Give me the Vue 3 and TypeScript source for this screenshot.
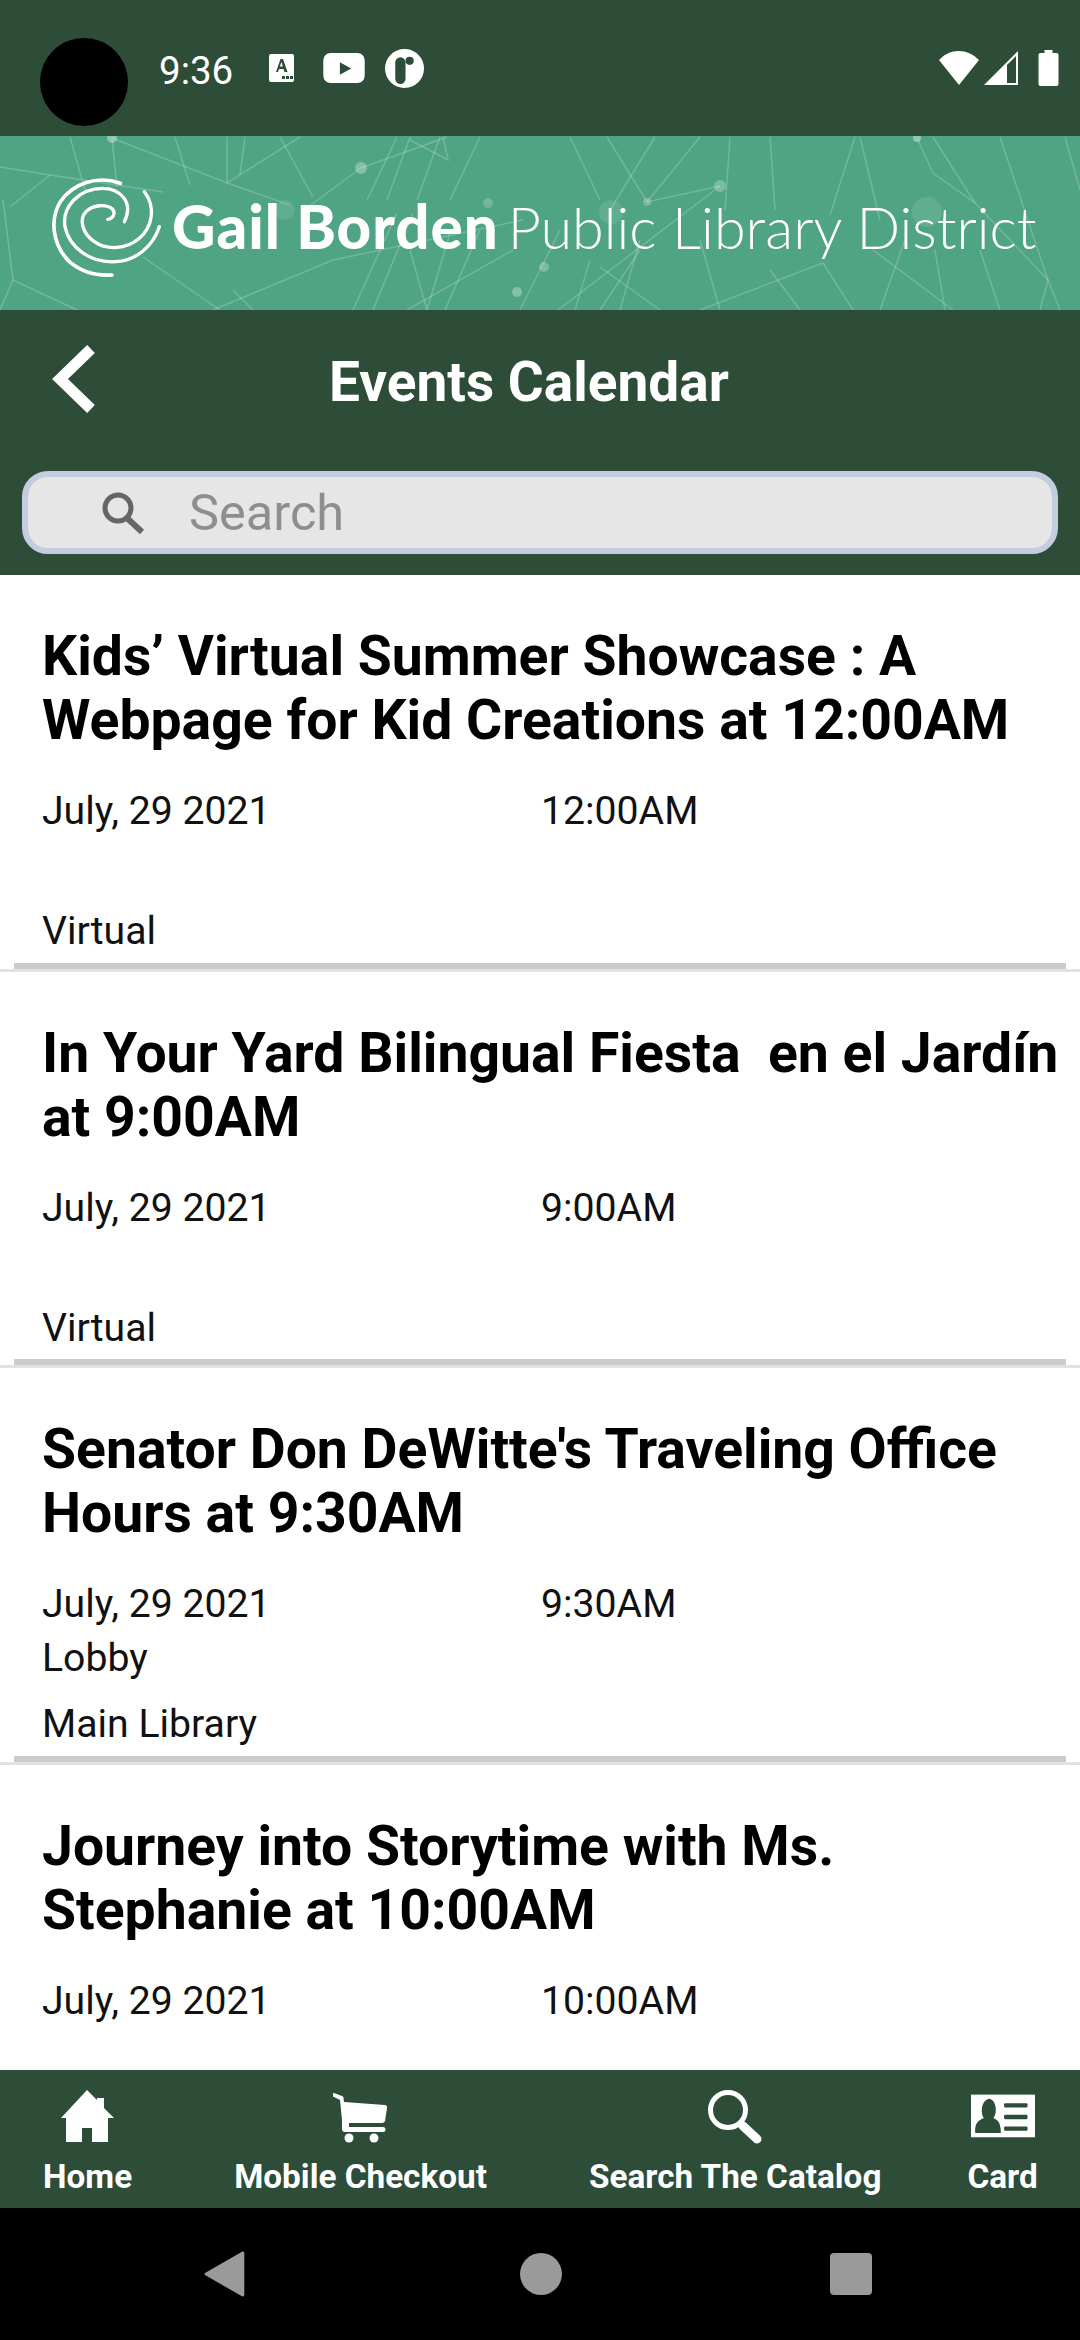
<template>
  <div class="screen">
    <div class="status">
      <div class="status__camera"></div>
      <span class="status__time">9:36</span>
      <svg class="status__a" width="26" height="28" viewBox="0 0 26 28">
        <rect x="0" y="0" width="25" height="28" rx="2" fill="#fff" />
        <path d="M7 18 L11.5 5 h2.5 L18.500 18 h-3 l-1-3 h-4.500 l-1 3z M10.800 12.500 h3 L12.500 8z" fill="#2d4d39" fill-rule="evenodd" />
        <rect x="13" y="22" width="3" height="3" fill="#2d4d39" />
        <rect x="17" y="22" width="3" height="3" fill="#2d4d39" />
        <rect x="21" y="22" width="3" height="3" fill="#2d4d39" />
      </svg>
      <svg class="status__yt" width="42" height="30" viewBox="0 0 40 29">
        <rect x="0" y="0" width="40" height="29" rx="7" fill="#fff" />
        <path d="M16 9 L27 15 L16 21z" fill="#2d4d39" />
      </svg>
      <svg class="status__r" width="39" height="39" viewBox="0 0 38 38">
        <circle cx="19" cy="19" r="19" fill="#fff" />
        <rect x="10" y="8" width="10" height="26" rx="5" fill="#2d4d39" />
        <circle cx="24" cy="11.500" r="4" fill="#2d4d39" />
      </svg>
      <div class="status__right">
        <svg width="42" height="36" viewBox="0 0 42 36">
          <path d="M1 10 C12 -2 29 -2 41 10 L21 35z" fill="#fff" />
        </svg>
        <svg width="36" height="36" viewBox="0 0 36 36">
          <path d="M1 35 L35 1 V35z" fill="#fff" />
          <path d="M24 15 L33 6 V33 H24z" fill="#2d4d39" />
          <path d="M24 15 L24 33 H22 V17z" fill="#fff" />
        </svg>
        <svg class="status__batt" width="21" height="36" viewBox="0 0 20 36">
          <path d="M6 0 H14 V3 H18 a2 2 0 0 1 2 2 V34 a2 2 0 0 1-2 2 H2 a2 2 0 0 1-2-2 V5 a2 2 0 0 1 2-2 H6z" fill="#fff" />
        </svg>
      </div>
    </div>

    <div class="banner">
      <svg class="banner__bg" width="1080" height="174" viewBox="0 136 1080 174">
        <path v-for="(d, i) in bannerLines" :key="i" :d="d" fill="none" stroke="#fff" stroke-opacity="0.2" stroke-width="1.500" />
        <circle v-for="(n, i) in bannerNodes" :key="'n' + i" :cx="n[0]" :cy="n[1]" :r="n[2]" fill="#fff" :fill-opacity="n[3]" />
      </svg>
      <svg class="banner__logo" width="125" height="115" viewBox="0 0 375 345" fill="none" stroke="#fff" stroke-linecap="round">
        <path d="M238 40 C170 15 95 40 58 95 C25 150 35 225 85 275 C120 305 165 318 213 315" stroke-width="11" />
        <path d="M355 170 C335 230 285 272 225 275 C150 280 85 235 72 170 C62 110 115 55 185 55 C235 55 280 95 250 155" stroke-width="10" />
        <path d="M310 65 C345 110 335 170 295 205 C255 240 195 240 160 215 C125 190 112 150 135 125 C155 105 195 100 215 118 C225 130 215 148 200 148" stroke-width="10" />
      </svg>
      <div class="banner__name"><b>Gail Borden</b><span>Public Library District</span></div>
    </div>

    <div class="top">
      <div class="top__bar">
        <svg class="top__back" width="46" height="70" viewBox="0 0 46 70">
          <path d="M40 5 L9 35 L40 65" fill="none" stroke="#fff" stroke-width="11" />
        </svg>
        <div class="top__title">Events Calendar</div>
      </div>
      <div class="search">
        <svg width="44" height="44" viewBox="0 0 44 44" fill="none" stroke="#666">
          <circle cx="17" cy="17" r="13" stroke-width="5" />
          <path d="M26 27 L41 41" stroke-width="6" />
        </svg>
        <span class="search__text">Search</span>
      </div>
    </div>

    <div class="list">
      <div v-for="ev in events" :key="ev.title" class="event">
        <div class="event__title">{{ ev.title }}</div>
        <div class="event__when">
          <span class="event__date">{{ ev.date }}</span>
          <span>{{ ev.time }}</span>
        </div>
        <div class="event__room">{{ ev.room }}</div>
        <div class="event__place">{{ ev.place }}</div>
        <div class="event__line"></div>
      </div>
    </div>

    <div class="tabs">
      <div class="tab tab--home">
        <svg width="54" height="54" viewBox="0 0 54 54">
          <path d="M0 28 L26 0 L36 10 V8 H43 V18 L53 28 H47 V52 H31 V38 H21 V52 H5 V28z" fill="#fff" />
        </svg>
        <span>Home</span>
      </div>
      <div class="tab tab--cart">
        <svg width="56" height="54" viewBox="0 0 56 54">
          <path d="M1 3 L9 6 a2 2 0 0 1 1.500 2 L11 12 L52 15 a2.500 2.500 0 0 1 2 3 L52 31 a3 3 0 0 1-3 2 H16 V37 H50 a2 2 0 0 1 0 5 H12 a3 3 0 0 1-3-3 V30 L7 10 L1 7 a2 2 0 0 1 0-4z" fill="#fff" />
          <circle cx="16" cy="48" r="4.500" fill="#fff" />
          <circle cx="41" cy="48" r="4.500" fill="#fff" />
        </svg>
        <span>Mobile Checkout</span>
      </div>
      <div class="tab tab--search">
        <svg width="56" height="56" viewBox="0 0 56 56" fill="none" stroke="#fff" stroke-linecap="round">
          <circle cx="21" cy="21" r="17.500" stroke-width="5" />
          <path d="M36 37 L50 50" stroke-width="9" />
        </svg>
        <span>Search The Catalog</span>
      </div>
      <div class="tab tab--card">
        <svg width="64" height="45" viewBox="0 0 60 42">
          <rect width="60" height="40" fill="#fff" />
          <path d="M4 36 C3 26 8 24 12 22 C9 18 9 6 17 4 C24 5 25 18 21 22 C25 24 28 26 28 36 Z" fill="#2d4d39" />
          <rect x="31" y="8" width="22" height="4" rx="1" fill="#2d4d39" />
          <rect x="31" y="19" width="22" height="4" rx="1" fill="#2d4d39" />
          <rect x="31" y="30" width="22" height="4" rx="1" fill="#2d4d39" />
        </svg>
        <span>Card</span>
      </div>
    </div>

    <div class="sysnav">
      <svg width="42" height="48" viewBox="0 0 40 46">
        <path d="M2 23 L37 3 V43z" fill="#9a9a9a" stroke="#9a9a9a" stroke-width="3" stroke-linejoin="round" />
      </svg>
      <div class="sysnav__circle"></div>
      <div class="sysnav__square"></div>
    </div>
  </div>
</template>

<script setup lang="ts">
type EventType = {
  title: string
  date: string
  time: string
  room: string
  place: string
}

const events: EventType[] = [
  {
    title: 'Kids’ Virtual Summer Showcase : A Webpage for Kid Creations at 12:00AM',
    date: 'July, 29 2021',
    time: '12:00AM',
    room: '',
    place: 'Virtual',
  },
  {
    title: 'In Your Yard Bilingual Fiesta\u00a0 en el Jardín at 9:00AM',
    date: 'July, 29 2021',
    time: '9:00AM',
    room: '',
    place: 'Virtual',
  },
  {
    title: "Senator Don DeWitte's Traveling Office Hours at 9:30AM",
    date: 'July, 29 2021',
    time: '9:30AM',
    room: 'Lobby',
    place: 'Main Library',
  },
  {
    title: 'Journey into Storytime with Ms. Stephanie at 10:00AM',
    date: 'July, 29 2021',
    time: '10:00AM',
    room: '',
    place: '',
  },
]

const bannerLines: string[] = [
  'M0 167 L50 175 L163 192',
  'M50 175 L10 207',
  'M112 138 L117 187',
  'M112 138 L227 183 L300 137',
  'M227 183 L227 137',
  'M227 183 L290 205',
  'M280 137 L313 197',
  'M361 168 L447 137',
  'M361 168 L300 213',
  'M410 140 L448 160 L443 137',
  'M13 280 L77 310',
  'M13 280 L0 310',
  'M13 280 L3 200',
  'M143 257 L220 310',
  'M213 310 L333 260 L523 220',
  'M233 290 L253 310',
  'M407 310 L513 250',
  'M410 250 L427 310',
  'M353 310 L397 213',
  'M373 310 L413 213',
  'M427 310 L450 233',
  'M445 310 L480 230',
  'M367 200 L397 137',
  'M387 200 L410 137',
  'M417 200 L440 137',
  'M450 200 L480 137',
  'M70 137 L85 190',
  'M175 137 L190 185',
  'M245 137 L240 175',
  'M607 137 L647 202 L720 186',
  'M700 137 L647 202',
  'M720 186 L558 310',
  'M570 137 L600 200',
  'M655 137 L610 210',
  'M730 137 L725 210',
  'M770 137 L775 210',
  'M917 138 L933 173 L975 203 L1048 280 L1060 310',
  'M1000 137 L1048 280',
  'M1065 137 L1080 190',
  'M823 263 L700 310',
  'M823 263 L853 310',
  'M873 250 L953 310',
  'M855 137 L830 215',
  'M860 137 L880 220',
  'M933 137 L975 203',
  'M1048 280 L1040 310',
  'M600 267 L660 310',
  'M640 250 L600 310',
  'M700 240 L720 310',
  'M770 270 L800 310',
  'M520 310 L560 230',
  'M575 310 L590 260',
  'M620 310 L640 240',
  'M880 310 L905 240',
  'M935 250 L945 310',
  'M980 250 L1000 310',
]

const bannerNodes: number[][] = [
  [112, 138, 5, 0.35],
  [361, 168, 6, 0.3],
  [488, 203, 5, 0.2],
  [517, 292, 5, 0.3],
  [285, 210, 10, 0.1],
  [720, 186, 6, 0.25],
  [647, 202, 4, 0.25],
  [611, 212, 12, 0.1],
  [544, 267, 5, 0.25],
  [917, 138, 4, 0.35],
  [927, 212, 15, 0.1],
]
</script>

<style scoped>
.screen {
  display: flex;
  flex-direction: column;
  width: 1080px;
  height: 2340px;
  overflow: hidden;
  background: #fff;
  font-family: Roboto, sans-serif;
}

.status {
  display: flex;
  align-items: center;
  height: 136px;
  padding: 0 21px 0 40px;
  box-sizing: border-box;
  background: #2d4d39;
  color: #fff;
}

.status__camera {
  width: 88px;
  height: 88px;
  margin-top: 28px;
  border-radius: 50%;
  background: #000;
}

.status__time {
  margin-left: 31px;
  font-size: 38.5px;
  font-weight: 400;
  position: relative;
  top: 2px;
}

.status__a {
  margin-left: 36px;
}

.status__yt {
  margin-left: 28px;
}

.status__r {
  margin-left: 20px;
}

.status__right {
  display: flex;
  align-items: center;
  gap: 3px;
  margin-left: auto;
}

.status__batt {
  margin-left: 16px;
}

.banner {
  position: relative;
  display: flex;
  align-items: center;
  height: 174px;
  background: #4fa583;
  color: #fff;
  overflow: hidden;
}

.banner__bg {
  position: absolute;
  left: 0;
  top: 0;
}

.banner__logo {
  position: relative;
  margin-left: 41px;
  margin-top: 9px;
  flex: none;
}

.banner__name {
  position: relative;
  display: flex;
  align-items: baseline;
  margin-left: 6px;
  margin-top: 5px;
  font-family: Lato, sans-serif;
  font-size: 57.5px;
  white-space: nowrap;
}

.banner__name b {
  font-size: 60px;
  font-weight: 900;
  letter-spacing: 1px;
}

.banner__name span {
  margin-left: 9px;
  font-weight: 300;
}

.top {
  height: 265px;
  box-sizing: border-box;
  background: #2d4d39;
  padding: 0 22px;
}

.top__bar {
  display: flex;
  align-items: center;
  height: 160px;
}

.top__back {
  margin-left: 29px;
  margin-top: -22px;
}

.top__title {
  margin-left: 232px;
  margin-top: -16px;
  font-size: 55px;
  font-weight: 700;
  color: #fff;
}

.search {
  display: flex;
  align-items: center;
  height: 83px;
  margin-top: 1px;
  padding-left: 73px;
  box-sizing: border-box;
  border: 6px solid #c3cde0;
  border-radius: 26px;
  background: #e6e6e6;
}

.search__text {
  margin-left: 44px;
  font-size: 50.5px;
  color: #8e8e8e;
}

.list {
  flex: 1;
  min-height: 0;
  overflow: hidden;
}

.event {
  height: 396.500px;
  box-sizing: border-box;
  padding: 50px 0 0 42px;
  position: relative;
  border-bottom: 3px solid #e2e2e2;
}

.event__title {
  width: 1030px;
  font-size: 55.3px;
  font-weight: 700;
  line-height: 64px;
  color: #000;
}

.event__when {
  display: flex;
  margin-top: 31px;
  font-size: 39.2px;
  line-height: 54px;
  color: #111;
}

.event__date {
  width: 499px;
}

.event__room {
  height: 54px;
  font-size: 39.2px;
  line-height: 54px;
  color: #111;
}

.event__place {
  margin-top: 12px;
  font-size: 39.2px;
  line-height: 54px;
  color: #111;
}

.event__line {
  position: absolute;
  left: 14px;
  right: 14px;
  bottom: 0;
  height: 6px;
  background: #cbcbcb;
}

.tabs {
  display: flex;
  height: 138px;
  padding-left: 43px;
  box-sizing: border-box;
  background: #2d4d39;
}

.tab {
  display: flex;
  flex-direction: column;
  align-items: center;
  font-size: 33.3px;
  font-weight: 700;
  color: #fff;
}

.tab--cart,
.tab--search {
  margin-left: 102px;
}

.tab--card {
  margin-left: 86px;
}

.tab svg {
  display: block;
  height: 56px;
  margin-top: 19px;
  margin-bottom: 12px;
}

.sysnav {
  display: flex;
  align-items: center;
  height: 132px;
  padding-left: 204px;
  box-sizing: border-box;
  background: #000;
}

.sysnav__circle {
  width: 42px;
  height: 42px;
  margin-left: 274px;
  border-radius: 50%;
  background: #9a9a9a;
}

.sysnav__square {
  width: 42px;
  height: 42px;
  margin-left: 268px;
  border-radius: 4px;
  background: #9a9a9a;
}
</style>
